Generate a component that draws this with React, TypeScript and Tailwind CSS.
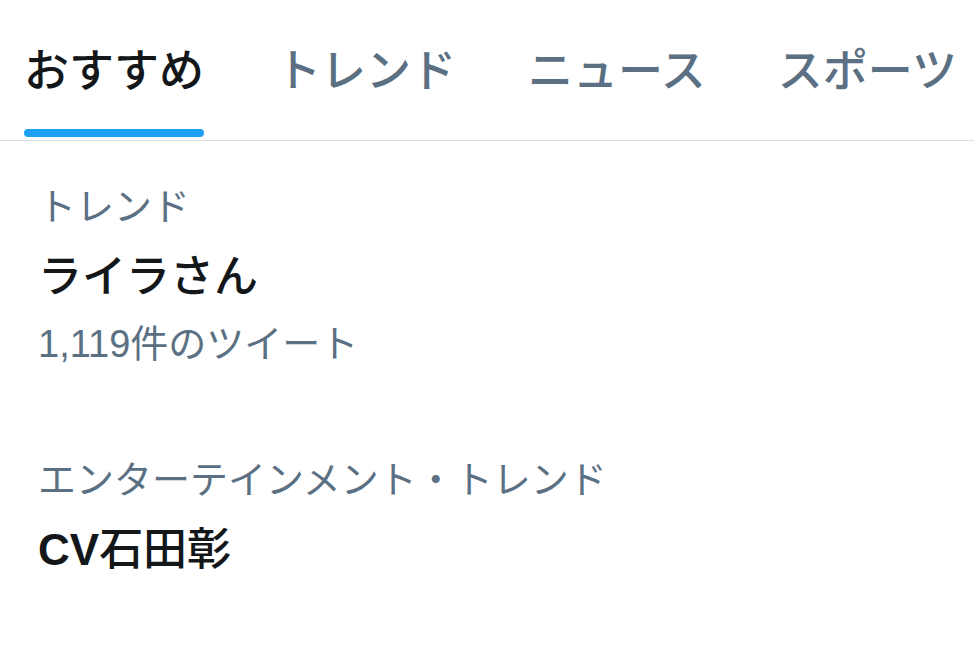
const tabs = ["おすすめ", "トレンド", "ニュース", "スポーツ"];

const trends = [
  { category: "トレンド", name: "ライラさん", count: "1,119件のツイート" },
  { category: "エンターテインメント・トレンド", name: "CV石田彰", count: "" },
];

// latin runs in bold, kana/kanji in medium, like the app renders them
function TrendName({ name }: { name: string }) {
  const parts = name.split(/([A-Za-z0-9]+)/).filter((p) => p !== "");
  return (
    <>
      {parts.map((p, i) =>
        /^[A-Za-z0-9]+$/.test(p) ? (
          <span key={i} className="font-bold">{p}</span>
        ) : (
          <span key={i}>{p}</span>
        )
      )}
    </>
  );
}

export default function App() {
  return (
    <div
      className="w-[974px] h-[664px] overflow-hidden bg-white"
      style={{ fontFamily: '"Liberation Sans", "Noto Sans CJK JP", sans-serif' }}
    >
      <div className="flex gap-[72px] pl-[24px] border-b border-[#d9dee2] whitespace-nowrap">
        {tabs.map((tab, i) => (
          <div key={tab} className="flex flex-col items-stretch">
            <div
              className={
                "h-[129px] flex items-center text-[45px] font-medium pt-[15px] " +
                (i === 0 ? "text-[#14171a]" : "text-[#5b7083]")
              }
            >
              {tab}
            </div>
            <div className={"h-[8px] rounded-full mb-[3px] " + (i === 0 ? "bg-[#1da1f2]" : "bg-transparent")} />
          </div>
        ))}
      </div>

      <div className="flex flex-col">
        {trends.map((t) => (
          <div key={t.name} className="px-[38px] pt-[40px] pb-[45px]">
            <p className="text-[38px] leading-[52px] text-[#5b7083]">{t.category}</p>
            <p className="text-[44px] leading-[64px] mt-[12px] font-medium text-[#14171a]">
              <TrendName name={t.name} />
            </p>
            {t.count && <p className="text-[38px] leading-[50px] mt-[10px] text-[#5b7083]">{t.count}</p>}
          </div>
        ))}
      </div>
    </div>
  );
}
